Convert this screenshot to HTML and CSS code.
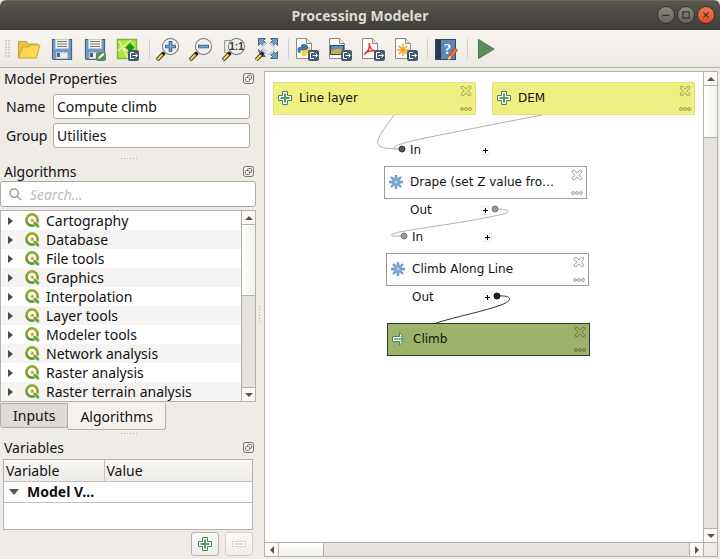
FILE: index.html
```html
<!DOCTYPE html>
<html lang="en">
<head>
<meta charset="utf-8">
<title>Processing Modeler</title>
<link rel="stylesheet" href="styles.css">
</head>
<body>
<svg class="defs" aria-hidden="true">
  <defs>
    <linearGradient id="ring" x1="0" y1="0" x2="0" y2="1"><stop offset="0" stop-color="#93b023"/><stop offset="1" stop-color="#589632"/></linearGradient>
    <symbol id="q" viewBox="0 0 16 16">
      <circle cx="7.500" cy="7.500" r="6" fill="#fff" stroke="url(#ring)" stroke-width="2.800"/>
      <path d="M9 9l6 6" stroke="#fff" stroke-width="4.400"/>
      <path d="M9 9.200h2.400l3.800 3.800v2.400h-2.400L9 11.600z" fill="#6aa43c"/>
      <circle cx="7.800" cy="7.800" r="2" fill="#f6c46a"/>
      <circle cx="7.800" cy="7.800" r="1.200" fill="#ee7913"/>
    </symbol>
    <symbol id="float" viewBox="0 0 11 11">
      <rect x=".5" y=".5" width="10" height="10" rx="2" fill="none" stroke="#77746e"/>
      <rect x="4.500" y="2.500" width="4" height="4" rx="1" fill="none" stroke="#77746e"/>
      <rect x="2.500" y="4.500" width="4" height="4" rx="1" fill="#efebe7" stroke="#77746e"/>
    </symbol>
    <symbol id="badge" viewBox="0 0 11 11">
      <rect width="11" height="11" rx="2" fill="#415a70"/>
      <path d="M6 2.500H2.500v6H6M4.500 5.500h5M7.500 3.500l2 2-2 2" fill="none" stroke="#fff"/>
    </symbol>
    <symbol id="page" viewBox="0 0 24 24">
      <path d="M1.500 1.500h10l5 5v15h-15z" fill="#fdfdfc" stroke="#888a85"/>
      <path d="M11.500 1.500v5h5" fill="#e6e6e4" stroke="#888a85"/>
    </symbol>
    <symbol id="lens" viewBox="0 0 24 24">
      <path d="M1 23l7-7" stroke="#3a3a34" stroke-width="4"/>
      <path d="M1.500 22.500l5.500-5.500" stroke="#f8d13d" stroke-width="2.200"/>
      <path d="M6.500 17.500l2-2" stroke="#151515" stroke-width="3"/>
      <circle cx="14.500" cy="9.500" r="8" fill="#eeeeec" stroke="#8a8a86" stroke-width="1.300"/>
      <circle cx="14.500" cy="9.500" r="6.600" fill="none" stroke="#fff"/>
    </symbol>
    <symbol id="disk" viewBox="0 0 24 24">
      <path d="M2.500 2.500h19v20h-18l-1-1z" fill="#6f9bcb" stroke="#49637f" stroke-width="1.200"/>
      <rect x="5.500" y="2.500" width="13" height="9" fill="#f3f3f1" stroke="#c5c9ca"/>
      <path d="M7 4.500h10M7 7h10M7 9.500h10" stroke="#777"/>
      <rect x="6.500" y="15.500" width="11" height="6" fill="#eeeeec" stroke="#c5c9ca"/>
      <rect x="7" y="16" width="3" height="4" fill="#49637f"/>
    </symbol>
    <symbol id="plus" viewBox="0 0 14 14">
      <path d="M4.500.5h5v4h4v5h-4v4h-5v-4h-4v-5h4z" fill="#fff" stroke="#49845a" stroke-width="1"/>
      <path d="M7 2.500v9M2.500 7h9" stroke="#5b9b67" stroke-width="2"/>
    </symbol>
    <symbol id="gear" viewBox="0 0 16 16">
      <path d="M8 0v16M0 8h16M2.300 2.300l11.400 11.400M13.700 2.300L2.300 13.700" stroke="#6d97cb" stroke-width="2.600"/>
      <circle cx="8" cy="8" r="5.300" fill="#82a9d8"/>
      <circle cx="8" cy="8" r="2.400" fill="#e7eef8" stroke="#5f8bc2"/>
      <circle cx="8" cy="8" r=".8" fill="#6d97cb"/>
    </symbol>
    <symbol id="cross" viewBox="0 0 12 12">
      <path d="M1 3Q1 1 3 1L6 3.800 9 1Q11 1 11 3L8.200 6 11 9Q11 11 9 11L6 8.200 3 11Q1 11 1 9L3.800 6z" fill="currentColor" fill-opacity=".12" stroke="currentColor"/>
    </symbol>
    <symbol id="more" viewBox="0 0 12 4">
      <g fill="currentColor" fill-opacity=".35" stroke="currentColor"><circle cx="2" cy="2" r="1.500"/><circle cx="6" cy="2" r="1.500"/><circle cx="10" cy="2" r="1.500"/></g>
    </symbol>
  </defs>
</svg>

<div class="window">
  <header class="titlebar">
    <h1>Processing Modeler</h1>
    <div class="winbtns">
      <button aria-label="Minimize"><svg viewBox="0 0 18 18"><path d="M5 9.500h8"/></svg></button>
      <button aria-label="Maximize"><svg viewBox="0 0 18 18"><path d="M5.500 5.500h7v7h-7z"/></svg></button>
      <button class="close" aria-label="Close"><svg viewBox="0 0 18 18"><path d="M6 6l6 6M12 6l-6 6"/></svg></button>
    </div>
  </header>

  <nav class="toolbar" aria-label="Tools">
    <span class="grip"></span>
    <button aria-label="Open model"><svg viewBox="0 0 24 24"><path d="M1.500 20.500v-16h8l2 2.500h9v4" fill="#eac343" stroke="#c3a137"/><path d="M1.500 21l4-11h6l2-2h9.500l-3.500 13z" fill="#fcd94e" stroke="#c9a638"/></svg></button>
    <button aria-label="Save model"><svg><use href="#disk"/></svg></button>
    <button aria-label="Save model as"><svg viewBox="0 0 24 24"><use href="#disk"/><rect x="13" y="15" width="10" height="9" rx="2" fill="#5a8c5a"/><path d="M15 22l1-2.500 4-3.500 1.500 1.500-4 3.500z" fill="#fff"/></svg></button>
    <button aria-label="Save model into project"><svg viewBox="0 0 24 24"><path d="M1.500 2.500h19v19h-19z" fill="#b9e04a" stroke="#6abf2a" stroke-width="1.400"/><path d="M2 14L15 3M3 4l9 17M6 11l13 6" stroke="#e4f6ae" stroke-width="1.500"/><path d="M14 6l4.500 4.500-4.500 4.500-4.500-4.500z" fill="#139a13"/><use href="#badge" x="12" y="13" width="11" height="11"/></svg></button>
    <span class="sep"></span>
    <button aria-label="Zoom in"><svg viewBox="0 0 24 24"><use href="#lens"/><path d="M14.500 4v11M9 9.500h11" stroke="#42648b" stroke-width="3.600"/><path d="M14.500 5v9M10 9.500h9" stroke="#729fcf" stroke-width="1.800"/></svg></button>
    <button aria-label="Zoom out"><svg viewBox="0 0 24 24"><use href="#lens"/><path d="M9 9.500h11" stroke="#42648b" stroke-width="3.600"/><path d="M10 9.500h9" stroke="#729fcf" stroke-width="1.800"/></svg></button>
    <button aria-label="Zoom to 100%"><svg viewBox="0 0 24 24"><path d="M2.500 3.500h12v12h-12z" fill="#e8e8e6" stroke="#999"/><use href="#lens"/><text class="ratio" x="14.500" y="13" text-anchor="middle">1:1</text></svg></button>
    <button aria-label="Zoom full"><svg viewBox="0 0 24 24"><g fill="#7299c5" stroke="#49637f"><path d="M3.500 1.500h7L8.500 3.500l3 3-3 3-3-3-2 2zM15.500 1.500h7v7l-2-2-3 3-3-3 3-3zM22.500 14.500v7h-7l2-2-3-3 3-3 3 3zM3.500 12.500l2 2 3-3 3 3-3 3 2 2h-5z"/></g><circle cx="13" cy="11.500" r="6" fill="#eeeeec" fill-opacity=".75" stroke="#d5d5d1"/><path d="M0 24l7.500-7.500" stroke="#3a3a34" stroke-width="4"/><path d="M0 24l6-6" stroke="#f8d13d" stroke-width="2.200"/><path d="M6.500 17.500l2-2" stroke="#111" stroke-width="3"/></svg></button>
    <span class="sep"></span>
    <button aria-label="Export as Python script"><svg viewBox="0 0 24 24"><use href="#page"/><path d="M9 7c-3 0-3 1-3 3H4c-2 1-2 5 0 6h1.500v-2.500h5c2 0 2.500-1 2.500-3s-1-3.500-4-3.500z" fill="#3d76a8"/><path d="M9 19c3 0 3-1 3-3h2c2-1 2-5 0-6h-1v1.500c0 2-5 1-6 2.500-1 3-1 5 2 5z" fill="#fccb3a"/><use href="#badge" x="13" y="13" width="11" height="11"/></svg></button>
    <button aria-label="Export as image"><svg viewBox="0 0 24 24"><use href="#page"/><rect x="2.500" y="8.500" width="13" height="9" fill="#4a96d8" stroke="#444"/><path d="M3 17V14q6-4 12-1v4z" fill="#d3a847"/><use href="#badge" x="13" y="13" width="11" height="11"/></svg></button>
    <button aria-label="Export as PDF"><svg viewBox="0 0 24 24"><use href="#page"/><path d="M8 6q2 6-5 12M8 6q1 8 8 8M4 16q5-3 11-2" fill="none" stroke="#e3342b" stroke-width="1.500"/><use href="#badge" x="13" y="13" width="11" height="11"/></svg></button>
    <button aria-label="Export as SVG"><svg viewBox="0 0 24 24"><use href="#page"/><path d="M9 7.500v11M3.500 13h11M5.200 9.200l7.600 7.600M12.800 9.200l-7.600 7.600" stroke="#f6a21d" stroke-width="1.600" stroke-linecap="round"/><use href="#badge" x="13" y="13" width="11" height="11"/></svg></button>
    <span class="sep"></span>
    <button aria-label="Edit model help"><svg viewBox="0 0 24 24"><rect x="1.500" y="2.500" width="20" height="20" fill="#5c87b8" stroke="#34485e"/><path d="M2 3h5v19H2z" fill="#2b3b4c"/><text class="qmark" x="13.500" y="17" text-anchor="middle">?</text><path d="M14 23l1-4 6-8 2.500 2-6 8z" fill="#e87b2f" stroke="#a34a1c"/><path d="M14 23l1-4 2.500 2z" fill="#f7e0c0"/></svg></button>
    <span class="sep"></span>
    <button aria-label="Run model"><svg viewBox="0 0 24 24"><path d="M4.500 2.500L20 12 4.500 21.500z" fill="#5a8c5a" stroke="#47774a"/></svg></button>
  </nav>

  <div class="body">
    <aside class="sidebar">
      <section>
        <div class="dockhead"><h2>Model Properties</h2><button aria-label="Float Model Properties"><svg><use href="#float"/></svg></button></div>
        <form class="props">
          <label for="name">Name</label><input id="name" type="text" value="Compute climb">
          <label for="group">Group</label><input id="group" type="text" value="Utilities">
        </form>
      </section>
      <div class="splitter"></div>
      <section class="algs">
        <div class="dockhead"><h2>Algorithms</h2><button aria-label="Float Algorithms"><svg><use href="#float"/></svg></button></div>
        <div class="search">
          <svg viewBox="0 0 14 14" aria-hidden="true"><circle cx="5.500" cy="5.500" r="4.500"/><path d="M9 9l4 4"/></svg>
          <input type="search" aria-label="Search algorithms" placeholder="Search…">
        </div>
        <div class="treebox">
          <ul class="tree">
            <li><button aria-label="Expand Cartography"></button><svg><use href="#q"/></svg>Cartography</li>
            <li><button aria-label="Expand Database"></button><svg><use href="#q"/></svg>Database</li>
            <li><button aria-label="Expand File tools"></button><svg><use href="#q"/></svg>File tools</li>
            <li><button aria-label="Expand Graphics"></button><svg><use href="#q"/></svg>Graphics</li>
            <li><button aria-label="Expand Interpolation"></button><svg><use href="#q"/></svg>Interpolation</li>
            <li><button aria-label="Expand Layer tools"></button><svg><use href="#q"/></svg>Layer tools</li>
            <li><button aria-label="Expand Modeler tools"></button><svg><use href="#q"/></svg>Modeler tools</li>
            <li><button aria-label="Expand Network analysis"></button><svg><use href="#q"/></svg>Network analysis</li>
            <li><button aria-label="Expand Raster analysis"></button><svg><use href="#q"/></svg>Raster analysis</li>
            <li><button aria-label="Expand Raster terrain analysis"></button><svg><use href="#q"/></svg>Raster terrain analysis</li>
          </ul>
          <div class="vbar"><button class="up" aria-label="Scroll up"></button><div class="thumb tall"></div><div class="track"></div><button class="down" aria-label="Scroll down"></button></div>
        </div>
        <div class="tabs" role="tablist">
          <button role="tab" aria-selected="false">Inputs</button>
          <button role="tab" aria-selected="true">Algorithms</button>
        </div>
      </section>
      <div class="splitter low"></div>
      <section>
        <div class="dockhead"><h2>Variables</h2><button aria-label="Float Variables"><svg><use href="#float"/></svg></button></div>
        <div class="varbox">
          <table>
            <thead><tr><th>Variable</th><th>Value</th></tr></thead>
            <tbody><tr><td><button aria-label="Collapse Model Variables"></button>Model V…</td><td></td></tr></tbody>
          </table>
        </div>
        <div class="varbtns">
          <button aria-label="Add variable"><svg><use href="#plus"/></svg></button>
          <button disabled aria-label="Remove variable"><svg viewBox="0 0 14 14"><path d="M.5 4.500h13v5H.5z" fill="#fff" stroke="#dccfcf"/><path d="M2.500 7h9" stroke="#e4d6d6" stroke-width="2"/></svg></button>
        </div>
      </section>
    </aside>
    <div class="vsplit"></div>

    <main class="view">
      <div class="canvas">
        <svg class="wires" aria-hidden="true">
          <g fill="none" stroke="#b0b0b0">
            <path d="M129 43C109 71 103 77 137 77"/>
            <path d="M277 43C230 52 190 60 165 65C140 70 129 74 129 75.500C129 77 134 77 137 77"/>
            <path d="M230 137C242 137 249 139 238 142C210 149 162 155 140 159C122 162 122 165 139 164"/>
            <path d="M232 224C247 223 249 228 236 233C220 239 190 245 171 251" stroke="#333"/>
          </g>
          <circle cx="137" cy="77" r="3" fill="#555" stroke="#333"/>
          <circle cx="230" cy="137" r="3" fill="#999" stroke="#777"/>
          <circle cx="139" cy="164" r="3" fill="#999" stroke="#777"/>
          <circle cx="232" cy="224" r="3" fill="#222" stroke="#111"/>
        </svg>
        <article class="node input n-line"><svg class="ico"><use href="#plus"/></svg><span>Line layer</span><div class="acts"><button aria-label="Delete Line layer"><svg><use href="#cross"/></svg></button><button aria-label="Edit Line layer"><svg class="more"><use href="#more"/></svg></button></div></article>
        <article class="node input n-dem"><svg class="ico"><use href="#plus"/></svg><span>DEM</span><div class="acts"><button aria-label="Delete DEM"><svg><use href="#cross"/></svg></button><button aria-label="Edit DEM"><svg class="more"><use href="#more"/></svg></button></div></article>
        <div class="port p-in1"><span>In</span><button aria-label="Expand Drape inputs"></button></div>
        <article class="node n-drape"><svg class="ico"><use href="#gear"/></svg><span>Drape (set Z value fro…</span><div class="acts"><button aria-label="Delete Drape"><svg><use href="#cross"/></svg></button><button aria-label="Edit Drape"><svg class="more"><use href="#more"/></svg></button></div></article>
        <div class="port p-out1"><span>Out</span><button aria-label="Expand Drape outputs"></button></div>
        <div class="port p-in2"><span>In</span><button aria-label="Expand Climb Along Line inputs"></button></div>
        <article class="node n-along"><svg class="ico"><use href="#gear"/></svg><span>Climb Along Line</span><div class="acts"><button aria-label="Delete Climb Along Line"><svg><use href="#cross"/></svg></button><button aria-label="Edit Climb Along Line"><svg class="more"><use href="#more"/></svg></button></div></article>
        <div class="port p-out2"><span>Out</span><button aria-label="Expand Climb Along Line outputs"></button></div>
        <article class="node output n-climb"><svg class="ico" viewBox="0 0 14 14"><path d="M.5 4.500h7V.8L13.500 7l-6 6.200V9.500h-7z" fill="#fff" stroke="#49845a"/><path d="M2 7h9M8.700 4l2.800 3-2.800 3" fill="none" stroke="#5b9b67" stroke-width="1.300"/></svg><span>Climb</span><div class="acts"><button aria-label="Delete Climb"><svg><use href="#cross"/></svg></button><button aria-label="Edit Climb"><svg class="more"><use href="#more"/></svg></button></div></article>
      </div>
      <div class="vbar"><button class="up" aria-label="Scroll up"></button><div class="thumb"></div><div class="track"></div><button class="down" aria-label="Scroll down"></button></div>
      <div class="hbar"><button class="left" aria-label="Scroll left"></button><div class="thumb"></div><div class="track"></div><button class="right" aria-label="Scroll right"></button></div>
      <div class="corner"></div>
    </main>
  </div>
</div>
</body>
</html>
```

FILE: styles.css
```css
* { box-sizing: border-box; }

body {
  margin: 0;
  background: #e8e8f0;
  color: #111;
  font: 14px/19px "Noto Sans", "Open Sans", sans-serif;
}

button, input { font: inherit; color: inherit; }
button { padding: 0; border: 0; background: none; }
svg { display: block; }
h1, h2, ul { margin: 0; padding: 0; }
.defs { position: absolute; width: 0; height: 0; }

.window {
  display: flex;
  flex-direction: column;
  height: 100vh;
  overflow: hidden;
  border-radius: 6px 6px 0 0;
  background: #efebe7;
}

/* Title bar */
.titlebar {
  display: grid;
  grid-template-columns: 1fr auto 1fr;
  align-items: center;
  flex: none;
  height: 30px;
  padding-bottom: 1px;
  border-top: 1px solid #6b675e;
  background: linear-gradient(#59564e, #403e39);
  color: #dfdbd2;
}
.titlebar h1 { grid-column: 2; font-size: 14px; font-weight: 700; }
.winbtns { display: flex; justify-content: flex-end; gap: 2px; padding-right: 5px; }
.winbtns button {
  width: 18px;
  height: 18px;
  border: 1px solid #34322e;
  border-radius: 50%;
  background: linear-gradient(#8b8981, #66635b);
}
.winbtns .close { background: linear-gradient(#f3764f, #e2501f); }
.winbtns svg { width: 16px; height: 16px; fill: none; stroke: #35332e; stroke-width: 1.300; }

/* Toolbar */
.toolbar {
  display: flex;
  align-items: center;
  gap: 1px;
  flex: none;
  height: 38px;
  padding-left: 5px;
  border-bottom: 1px solid #b4b0ab;
  background: linear-gradient(#f8f5f1, #edeae5);
}
.toolbar button { width: 32px; height: 32px; padding: 4px; }
.toolbar svg { width: 24px; height: 24px; }
.grip {
  width: 5px;
  height: 17px;
  margin-right: 2px;
  background: radial-gradient(circle at 1px 1px, #d3cfca 1px, transparent 1px) 0 0 / 3px 3px;
}
.sep { width: 1px; height: 20px; margin: 0 1px 0 4px; background: #d3cfca; }
.ratio { font: 700 10px "Liberation Sans", sans-serif; fill: #333; }
.qmark { font: 700 15px "Liberation Serif", serif; fill: #fff; }

/* Panels */
.body { display: flex; flex: 1; min-height: 0; padding: 0 2px 2px 0; }
.sidebar { display: flex; flex-direction: column; flex: 0 0 256px; min-height: 0; }
.vsplit {
  flex: 0 0 8px;
  background: repeating-linear-gradient(#b5b1ac 0 1px, transparent 1px 3px) 3px 238px / 1px 16px no-repeat;
}
.splitter {
  flex: none;
  height: 13px;
  background: repeating-linear-gradient(90deg, #b5b1ac 0 1px, transparent 1px 3px) 121px 10px / 16px 1px no-repeat;
}
.splitter.low { height: 7px; background-position: 121px 3px; }
.dockhead {
  display: flex;
  align-items: center;
  justify-content: space-between;
  height: 20px;
  padding: 0 2px 0 4px;
}
.dockhead h2 { font-size: 14px; font-weight: 400; }
.dockhead svg { width: 11px; height: 11px; }

.props {
  display: grid;
  grid-template-columns: 43px 1fr;
  align-items: center;
  gap: 4px;
  padding: 6px 6px 0;
}
.props input { width: 100%; height: 25px; padding: 0 3px; border: 1px solid #aeaaa5; border-radius: 3px; background: #fff; }

.algs { display: flex; flex-direction: column; flex: 1; min-height: 0; }
.search {
  display: flex;
  align-items: center;
  gap: 8px;
  flex: none;
  height: 26px;
  margin-bottom: 3px;
  padding-left: 8px;
  border: 1px solid #aeaaa5;
  border-radius: 3px;
  background: #fff;
}
.search svg { width: 13px; height: 13px; fill: none; stroke: #888; stroke-width: 1.300; }
.search input { flex: 1; min-width: 0; padding: 0; border: 0; outline: 0; background: none; }
.search input::placeholder { color: #bdbbb8; font-style: italic; opacity: 1; }

.treebox { display: flex; flex: 1; min-height: 0; border: 1px solid #b4b0ab; background: #fff; }
.tree { flex: 1; overflow: hidden; list-style: none; }
.tree li { display: flex; align-items: center; height: 19px; padding-left: 7px; }
.tree li:nth-child(even) { background: #f5f4f2; }
.tree svg { width: 15px; height: 15px; margin: 0 6px 0 12px; }
.tree button { border: solid transparent; border-width: 4px 0 4px 5px; border-left-color: #4a4a48; }

.tabs { display: flex; align-items: flex-start; flex: none; height: 28px; padding-top: 1px; }
.tabs button {
  height: 25px;
  padding: 0 12px;
  border: 1px solid #b4b0ab;
  border-radius: 0 0 3px 3px;
  background: #dedad6;
}
.tabs [aria-selected="true"] { height: 27px; margin-left: -1px; border-top-color: #f4f1ed; background: #f5f2ee; }

.varbox { height: 71px; margin: 2px 3px 0; border: 1px solid #b4b0ab; background: #fff; }
.varbox table { width: 100%; table-layout: fixed; border-collapse: collapse; }
.varbox th, .varbox td { height: 21px; padding: 0 2px; border-bottom: 1px solid #c4c0bc; text-align: left; }
.varbox th { font-weight: 400; background: linear-gradient(#f9f8f6, #eceae7); }
.varbox th:first-child { width: 100px; border-right: 1px solid #c4c0bc; }
.varbox td { font-weight: 700; white-space: nowrap; }
.varbox td button { margin: 0 8px 2px 3px; border: solid transparent; border-width: 6px 5px 0; border-top-color: #555; vertical-align: middle; }
.varbtns { display: flex; justify-content: flex-end; gap: 6px; padding: 2px 3px 1px; }
.varbtns button {
  display: grid;
  place-items: center;
  width: 28px;
  height: 24px;
  border: 1px solid #b4b0ab;
  border-radius: 3px;
  background: linear-gradient(#fbfaf9, #efedea);
}
.varbtns button:disabled { border-color: #d2cfcb; }
.varbtns svg { width: 14px; height: 14px; }

/* Scroll bars */
.vbar, .hbar { display: flex; background: #e4e3df; }
.vbar { flex: none; flex-direction: column; width: 14px; border-left: 1px solid #b4b0ab; }
.hbar { height: 14px; border-top: 1px solid #b4b0ab; }
.vbar button, .hbar button { display: grid; place-items: center; flex: 0 0 14px; background: #faf9f7; }
.vbar .thumb { flex: 0 0 52px; border: solid #b4b0ab; border-width: 0 0 1px; background: linear-gradient(90deg, #fff, #f3f1ee); }
.vbar .tall { flex-basis: 71px; }
.hbar .thumb { flex: 0 0 45px; border-right: 1px solid #b4b0ab; background: linear-gradient(#fff, #f3f1ee); }
.track { flex: 1; }
.vbar .up { border-bottom: 1px solid #b4b0ab; }
.vbar .down { border-top: 1px solid #b4b0ab; }
.hbar .left { border-right: 1px solid #b4b0ab; }
.hbar .right { border-left: 1px solid #b4b0ab; }
.vbar button::after, .hbar button::after { content: ""; border: 4px solid transparent; }
.vbar .up::after { border-top: 0; border-bottom-color: #555; }
.vbar .down::after { border-bottom: 0; border-top-color: #555; }
.hbar .left::after { border-left: 0; border-right-color: #555; }
.hbar .right::after { border-right: 0; border-left-color: #555; }

/* Model canvas */
.view {
  display: grid;
  grid-template: 1fr 14px / 1fr 14px;
  flex: 1;
  min-width: 0;
  margin-top: 3px;
  border: 1px solid #b4b0ab;
}
.corner { border: solid #b4b0ab; border-width: 1px 0 0 1px; }
.canvas {
  position: relative;
  overflow: hidden;
  background: #fff;
  font: 12px/16px "DejaVu Sans", sans-serif;
}
.wires { position: absolute; width: 100%; height: 100%; }
.node {
  position: absolute;
  display: flex;
  align-items: center;
  width: 203px;
  height: 33px;
  padding: 0 3px 1px 4px;
  border: 1px solid #999b9e;
  background: #fff;
  color: #111;
}
.node span { flex: 1; white-space: nowrap; }
.node .ico { width: 14px; height: 14px; margin-right: 7px; }
.acts { display: flex; flex-direction: column; justify-content: space-between; height: 26px; color: #aaa; }
.acts svg { width: 12px; height: 12px; }
.acts .more { height: 4px; }
.input { border-color: #e6e074; background: #eef082; }
.input .acts { color: #a5a75b; }
.output { border-color: #2c3d28; background: #9db36b; }
.output .acts { color: #6e7d4b; }
.n-line { left: 8px; top: 10px; }
.n-dem { left: 227px; top: 10px; }
.n-drape { left: 119px; top: 94px; }
.n-along { left: 121px; top: 181px; }
.n-climb { left: 122px; top: 251px; }

.port { position: absolute; display: flex; align-items: center; justify-content: space-between; width: 80px; }
.port button {
  width: 9px;
  height: 9px;
  border: 1px solid #eee;
  background:
    linear-gradient(#000, #000) center / 5px 1px no-repeat,
    linear-gradient(#000, #000) center / 1px 5px no-repeat,
    #fff;
}
.p-in1 { left: 145px; top: 70px; }
.p-out1 { left: 145px; top: 130px; }
.p-in2 { left: 147px; top: 157px; }
.p-out2 { left: 147px; top: 217px; }
```
